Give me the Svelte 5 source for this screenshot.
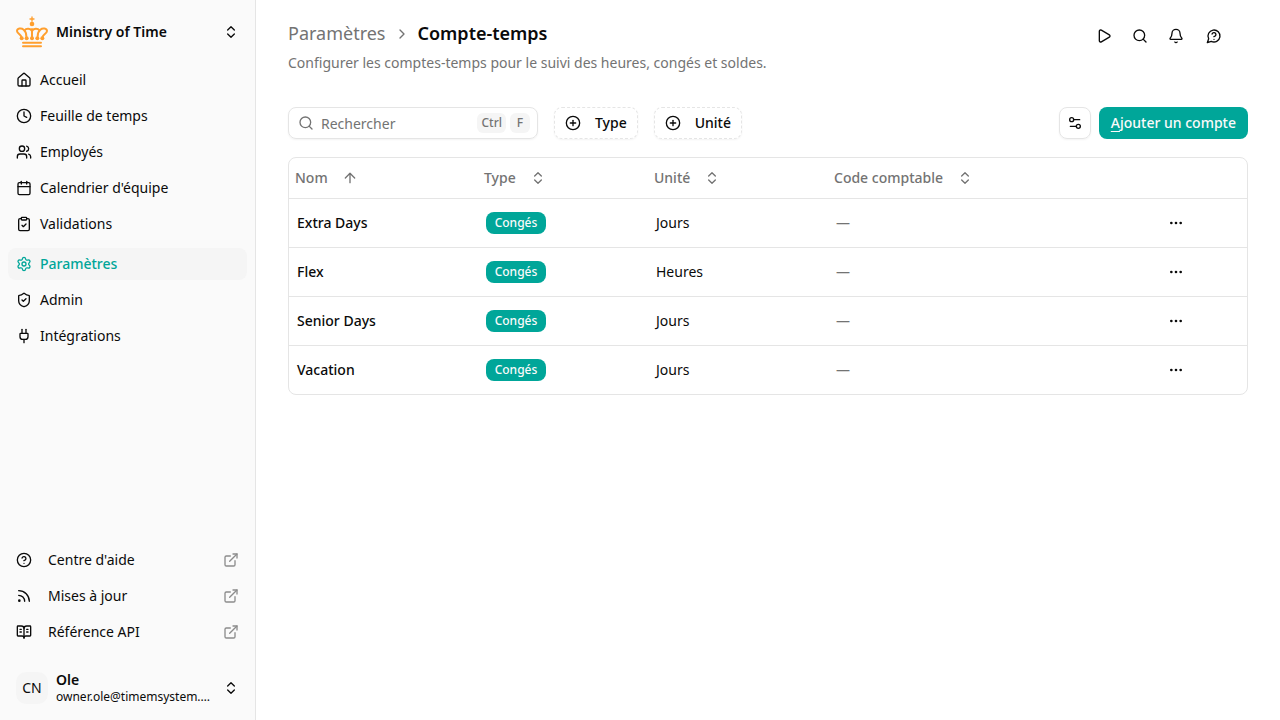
<script lang="ts">
  type NavItem = { label: string; icon: string; active?: boolean };
  type Account = { name: string; type: string; unit: string; code: string };
  type SortKey = keyof Account;

  const icons: Record<string, string[]> = {
    home: [
      'M15 21v-8a1 1 0 0 0-1-1h-4a1 1 0 0 0-1 1v8',
      'M3 10a2 2 0 0 1 .709-1.528l7-5.999a2 2 0 0 1 2.582 0l7 5.999A2 2 0 0 1 21 10v9a2 2 0 0 1-2 2H5a2 2 0 0 1-2-2z'
    ],
    clock: ['M2 12a10 10 0 1 0 20 0a10 10 0 1 0-20 0', 'M12 6v6l4 2'],
    users: [
      'M16 21v-2a4 4 0 0 0-4-4H6a4 4 0 0 0-4 4v2',
      'M5 7a4 4 0 1 0 8 0a4 4 0 1 0-8 0',
      'M22 21v-2a4 4 0 0 0-3-3.87',
      'M16 3.13a4 4 0 0 1 0 7.75'
    ],
    calendar: ['M8 2v4', 'M16 2v4', 'M5 4h14a2 2 0 0 1 2 2v14a2 2 0 0 1-2 2H5a2 2 0 0 1-2-2V6a2 2 0 0 1 2-2z', 'M3 10h18'],
    clipboard: [
      'M9 2h6a1 1 0 0 1 1 1v2a1 1 0 0 1-1 1H9a1 1 0 0 1-1-1V3a1 1 0 0 1 1-1z',
      'M16 4h2a2 2 0 0 1 2 2v14a2 2 0 0 1-2 2H6a2 2 0 0 1-2-2V6a2 2 0 0 1 2-2h2',
      'm9 14 2 2 4-4'
    ],
    settings: [
      'M9.671 4.136a2.34 2.34 0 0 1 4.659 0 2.34 2.34 0 0 0 3.319 1.915 2.34 2.34 0 0 1 2.33 4.033 2.34 2.34 0 0 0 0 3.831 2.34 2.34 0 0 1-2.33 4.033 2.34 2.34 0 0 0-3.319 1.915 2.34 2.34 0 0 1-4.659 0 2.34 2.34 0 0 0-3.32-1.915 2.34 2.34 0 0 1-2.33-4.033 2.34 2.34 0 0 0 0-3.831A2.34 2.34 0 0 1 6.35 6.051a2.34 2.34 0 0 0 3.319-1.915',
      'M9 12a3 3 0 1 0 6 0a3 3 0 1 0-6 0'
    ],
    shield: [
      'M20 13c0 5-3.5 7.5-7.66 8.95a1 1 0 0 1-.67-.01C7.5 20.5 4 18 4 13V6a1 1 0 0 1 1-1c2 0 4.5-1.2 6.24-2.72a1.17 1.17 0 0 1 1.52 0C14.51 3.81 17 5 19 5a1 1 0 0 1 1 1z',
      'm9 12 2 2 4-4'
    ],
    plug: ['M12 22v-5', 'M15 8V2', 'M17 8a1 1 0 0 1 1 1v4a4 4 0 0 1-4 4h-4a4 4 0 0 1-4-4V9a1 1 0 0 1 1-1z', 'M9 8V2'],
    help: ['M2 12a10 10 0 1 0 20 0a10 10 0 1 0-20 0', 'M9.09 9a3 3 0 0 1 5.83 1c0 2-3 3-3 3', 'M12 17h.01'],
    rss: ['M4 11a9 9 0 0 1 9 9', 'M4 4a16 16 0 0 1 16 16', 'M4 19a1 1 0 1 0 2 0a1 1 0 1 0-2 0'],
    book: [
      'M12 7v14',
      'M16 12h2',
      'M16 8h2',
      'M3 18a1 1 0 0 1-1-1V4a1 1 0 0 1 1-1h5a4 4 0 0 1 4 4 4 4 0 0 1 4-4h5a1 1 0 0 1 1 1v13a1 1 0 0 1-1 1h-6a3 3 0 0 0-3 3 3 3 0 0 0-3-3z',
      'M6 12h2',
      'M6 8h2'
    ],
    external: ['M15 3h6v6', 'M10 14 21 3', 'M18 13v6a2 2 0 0 1-2 2H5a2 2 0 0 1-2-2V8a2 2 0 0 1 2-2h6'],
    upDown: ['m7 15 5 5 5-5', 'm7 9 5-5 5 5'],
    up: ['m5 12 7-7 7 7', 'M12 19V5'],
    down: ['M12 5v14', 'm19 12-7 7-7-7'],
    right: ['m9 18 6-6-6-6'],
    play: ['M5 5a2 2 0 0 1 3.008-1.728l11.997 6.998a2 2 0 0 1 .003 3.458l-12 7A2 2 0 0 1 5 19z'],
    search: ['m21 21-4.34-4.34', 'M3 11a8 8 0 1 0 16 0a8 8 0 1 0-16 0'],
    bell: [
      'M10.268 21a2 2 0 0 0 3.464 0',
      'M3.262 15.326A1 1 0 0 0 4 17h16a1 1 0 0 0 .74-1.673C19.41 13.956 18 12.499 18 8A6 6 0 0 0 6 8c0 4.499-1.411 5.956-2.738 7.326'
    ],
    chat: ['M7.9 20A9 9 0 1 0 4 16.1L2 22Z', 'M9.09 9a3 3 0 0 1 5.83 1c0 2-3 3-3 3', 'M12 17h.01'],
    plus: ['M2 12a10 10 0 1 0 20 0a10 10 0 1 0-20 0', 'M8 12h8', 'M12 8v8'],
    sliders: ['M14 17H5', 'M19 7h-9', 'M14 17a3 3 0 1 0 6 0a3 3 0 1 0-6 0', 'M4 7a3 3 0 1 0 6 0a3 3 0 1 0-6 0'],
    dots: ['M11 12a1 1 0 1 0 2 0a1 1 0 1 0-2 0', 'M18 12a1 1 0 1 0 2 0a1 1 0 1 0-2 0', 'M4 12a1 1 0 1 0 2 0a1 1 0 1 0-2 0']
  };

  const mainNav: NavItem[] = [
    { label: 'Accueil', icon: 'home' },
    { label: 'Feuille de temps', icon: 'clock' },
    { label: 'Employés', icon: 'users' },
    { label: "Calendrier d'équipe", icon: 'calendar' },
    { label: 'Validations', icon: 'clipboard' }
  ];

  const adminNav: NavItem[] = [
    { label: 'Paramètres', icon: 'settings', active: true },
    { label: 'Admin', icon: 'shield' },
    { label: 'Intégrations', icon: 'plug' }
  ];

  const helpNav: NavItem[] = [
    { label: "Centre d'aide", icon: 'help' },
    { label: 'Mises à jour', icon: 'rss' },
    { label: 'Référence API', icon: 'book' }
  ];

  const tools = [
    { label: 'Démarrer', icon: 'play' },
    { label: 'Recherche', icon: 'search' },
    { label: 'Notifications', icon: 'bell' },
    { label: 'Aide', icon: 'chat' }
  ];

  const columns: { key: SortKey; label: string }[] = [
    { key: 'name', label: 'Nom' },
    { key: 'type', label: 'Type' },
    { key: 'unit', label: 'Unité' },
    { key: 'code', label: 'Code comptable' }
  ];

  const accounts: Account[] = [
    { name: 'Extra Days', type: 'Congés', unit: 'Jours', code: '' },
    { name: 'Flex', type: 'Congés', unit: 'Heures', code: '' },
    { name: 'Senior Days', type: 'Congés', unit: 'Jours', code: '' },
    { name: 'Vacation', type: 'Congés', unit: 'Jours', code: '' }
  ];

  let query = $state('');
  let sortKey = $state<SortKey>('name');
  let ascending = $state(true);
  let searchBox: HTMLInputElement;

  let rows = $derived(
    accounts
      .filter((a) => a.name.toLowerCase().includes(query.toLowerCase()))
      .sort((a, b) => a[sortKey].localeCompare(b[sortKey]) * (ascending ? 1 : -1))
  );

  function sortBy(key: SortKey) {
    ascending = key == sortKey ? !ascending : true;
    sortKey = key;
  }

  function sortIcon(key: SortKey) {
    if (key != sortKey) return 'upDown';
    return ascending ? 'up' : 'down';
  }

  function onKeydown(e: KeyboardEvent) {
    if (e.ctrlKey && e.key == 'f') {
      e.preventDefault();
      searchBox.focus();
    }
  }
</script>

<svelte:window onkeydown={onKeydown} />

{#snippet icon(name: string)}
  <svg class="icon" viewBox="0 0 24 24" aria-hidden="true">
    {#each icons[name] as d}
      <path {d} />
    {/each}
  </svg>
{/snippet}

{#snippet navList(items: NavItem[])}
  <ul>
    {#each items as item}
      <li>
        <a class="navItem" class:active={item.active} href="#{item.icon}">
          {@render icon(item.icon)}
          <span>{item.label}</span>
        </a>
      </li>
    {/each}
  </ul>
{/snippet}

<div class="layout">
  <aside>
    <button class="switcher">
      <svg class="crown" viewBox="0 0 96 96" aria-hidden="true">
        <path class="cross" d="M48 3v13M42 9h12" />
        <circle cx="48" cy="24" r="7" />
        <path d="M16 62C14 55 3 52 3 45c0-8 13-10 20-4 5 4 8 12 8 20" />
        <path d="M80 62c2-7 13-10 13-17 0-8-13-10-20-4-5 4-8 12-8 20" />
        <path d="M26 43c4-7 18-7 22 2 4-9 18-9 22-2M48 40v22" />
        <circle cx="17" cy="67" r="6" />
        <circle cx="32" cy="67" r="6" />
        <circle cx="48" cy="67" r="6" />
        <circle cx="64" cy="67" r="6" />
        <circle cx="79" cy="67" r="6" />
        <path d="M21 80h54M21 91h54" />
      </svg>
      <strong>Ministry of Time</strong>
      {@render icon('upDown')}
    </button>

    <nav class="main">
      {@render navList(mainNav)}
      {@render navList(adminNav)}
    </nav>

    <nav class="help">
      <ul>
        {#each helpNav as item}
          <li>
            <a class="navItem wide" href="#{item.icon}">
              {@render icon(item.icon)}
              <span>{item.label}</span>
              <span class="ext">{@render icon('external')}</span>
            </a>
          </li>
        {/each}
      </ul>
    </nav>

    <button class="switcher">
      <span class="avatar">CN</span>
      <span class="user">
        <strong>Ole</strong>
        <small>owner.ole@timemsystem.com</small>
      </span>
      {@render icon('upDown')}
    </button>
  </aside>

  <main>
    <header>
      <div class="heading">
        <div class="crumbs">
          <a href="#settings">Paramètres</a>
          {@render icon('right')}
          <h1>Compte-temps</h1>
        </div>
        <p>Configurer les comptes-temps pour le suivi des heures, congés et soldes.</p>
      </div>
      <div class="tools">
        {#each tools as tool}
          <button class="ghost" aria-label={tool.label}>{@render icon(tool.icon)}</button>
        {/each}
      </div>
    </header>

    <div class="toolbar">
      <label class="search">
        {@render icon('search')}
        <input type="text" placeholder="Rechercher" aria-label="Rechercher" bind:value={query} bind:this={searchBox} />
        <kbd>Ctrl</kbd>
        <kbd>F</kbd>
      </label>
      <button class="filter">{@render icon('plus')}Type</button>
      <button class="filter">{@render icon('plus')}Unité</button>
      <div class="actions">
        <button class="square" aria-label="Colonnes">{@render icon('sliders')}</button>
        <button class="primary"><span><u>A</u>jouter un compte</span></button>
      </div>
    </div>

    <div class="tableBox">
      <table>
        <colgroup>
          <col class="colName" />
          <col class="colType" />
          <col class="colUnit" />
          <col />
          <col class="colMenu" />
        </colgroup>
        <thead>
          <tr>
            {#each columns as col}
              <th scope="col">
                <button class="sort" onclick={() => sortBy(col.key)}>
                  {col.label}
                  {@render icon(sortIcon(col.key))}
                </button>
              </th>
            {/each}
            <th></th>
          </tr>
        </thead>
        <tbody>
          {#each rows as row (row.name)}
            <tr>
              <td class="name">{row.name}</td>
              <td><span class="badge">{row.type}</span></td>
              <td>{row.unit}</td>
              <td class="muted">{row.code || '—'}</td>
              <td class="menu">
                <button class="ghost" aria-label="Actions {row.name}">{@render icon('dots')}</button>
              </td>
            </tr>
          {/each}
        </tbody>
      </table>
    </div>
  </main>
</div>

<style>
  :global(body) {
    margin: 0;
    background: #fff;
    color: #0a0a0a;
    font: 14px/20px "Noto Sans", sans-serif;
  }

  * {
    box-sizing: border-box;
  }

  button {
    display: flex;
    align-items: center;
    border: 0;
    background: none;
    color: inherit;
    font: inherit;
    cursor: pointer;
  }

  a {
    color: inherit;
    text-decoration: none;
  }

  ul {
    display: flex;
    flex-direction: column;
    gap: 4px;
    margin: 0;
    padding: 0;
    list-style: none;
  }

  strong {
    font-weight: 600;
  }

  .icon {
    flex: none;
    width: 16px;
    height: 16px;
    fill: none;
    stroke: currentColor;
    stroke-width: 2;
    stroke-linecap: round;
    stroke-linejoin: round;
  }

  .layout {
    display: flex;
    min-height: 100vh;
  }

  /* sidebar */
  aside {
    display: flex;
    flex-direction: column;
    flex: none;
    gap: 8px;
    width: 256px;
    padding: 8px;
    background: #fafafa;
    border-right: 1px solid #e5e5e5;
  }

  .switcher {
    gap: 8px;
    width: 100%;
    height: 48px;
    padding: 8px;
    border-radius: 8px;
    text-align: left;
  }

  .switcher > strong,
  .user {
    flex: 1;
    min-width: 0;
  }

  .crown {
    flex: none;
    width: 32px;
    height: 32px;
    fill: none;
    stroke: #ff9f2e;
    stroke-width: 6;
    stroke-linecap: round;
  }

  .crown circle {
    fill: #ff9f2e;
    stroke: none;
  }

  .crown .cross {
    stroke-width: 4;
  }

  .main {
    display: flex;
    flex-direction: column;
    flex: 1;
    gap: 8px;
  }

  .help {
    padding-bottom: 8px;
  }

  .navItem {
    display: flex;
    align-items: center;
    gap: 8px;
    height: 32px;
    padding: 0 8px;
    border-radius: 8px;
  }

  .navItem.active {
    background: #f5f5f5;
    color: #00a699;
    font-weight: 500;
  }

  .navItem.wide {
    gap: 16px;
  }

  .ext {
    display: flex;
    margin-left: auto;
    color: #8c8c8c;
  }

  .avatar {
    display: flex;
    align-items: center;
    justify-content: center;
    flex: none;
    width: 32px;
    height: 32px;
    border-radius: 10px;
    background: #f5f5f5;
  }

  .user {
    display: flex;
    flex-direction: column;
    line-height: 18px;
  }

  .user small {
    overflow: hidden;
    font-size: 12px;
    line-height: 16px;
    text-overflow: ellipsis;
    white-space: nowrap;
  }

  /* page */
  main {
    flex: 1;
    min-width: 0;
    padding: 20px 32px;
  }

  header {
    display: flex;
    align-items: flex-start;
    justify-content: space-between;
    margin-bottom: 34px;
  }

  .heading {
    display: flex;
    flex-direction: column;
    gap: 6px;
    color: #737373;
  }

  .crumbs {
    display: flex;
    align-items: center;
    gap: 8px;
    font-size: 18px;
    line-height: 27px;
  }

  h1 {
    margin: 0;
    color: #0a0a0a;
    font-size: inherit;
    font-weight: 600;
  }

  p {
    margin: 0;
  }

  .tools {
    display: flex;
    gap: 4px;
    padding-right: 16px;
  }

  .ghost {
    justify-content: center;
    width: 32px;
    height: 32px;
    padding: 0;
    border-radius: 8px;
  }

  .tools .ghost:last-child {
    width: 36px;
  }

  .toolbar {
    display: flex;
    gap: 16px;
    margin-bottom: 18px;
  }

  .search,
  .filter,
  .square {
    height: 32px;
    border: 1px solid #e5e5e5;
    border-radius: 8px;
    box-shadow: 0 1px 2px rgba(0, 0, 0, 0.05);
  }

  .search {
    display: flex;
    align-items: center;
    gap: 4px;
    width: 250px;
    padding: 0 7px 0 9px;
    color: #737373;
  }

  input {
    flex: 1;
    min-width: 0;
    padding: 2px 0 0 3px;
    border: 0;
    outline: 0;
    background: none;
    color: #0a0a0a;
    font: inherit;
  }

  input::placeholder {
    color: #737373;
    opacity: 1;
  }

  kbd {
    min-width: 20px;
    padding: 0 4px;
    border-radius: 6px;
    background: #f5f5f5;
    font: 500 12px/20px "Noto Sans", sans-serif;
    text-align: center;
  }

  .filter {
    gap: 14px;
    padding: 0 10px;
    border-style: dashed;
    font-weight: 500;
  }

  .actions {
    display: flex;
    gap: 8px;
    margin-left: auto;
  }

  .square {
    justify-content: center;
    width: 32px;
    padding: 0;
  }

  .primary {
    height: 32px;
    padding: 0 12px;
    border-radius: 8px;
    background: #00a699;
    color: #fafafa;
    font-weight: 500;
  }

  u {
    text-underline-offset: 3px;
  }

  /* accounts table */
  .tableBox {
    overflow: hidden;
    border: 1px solid #e5e5e5;
    border-radius: 8px;
  }

  table {
    width: 100%;
    border-spacing: 0;
    table-layout: fixed;
  }

  .colName {
    width: 189px;
  }

  .colType {
    width: 170px;
  }

  .colUnit {
    width: 180px;
  }

  .colMenu {
    width: 143px;
  }

  th {
    height: 40px;
    padding: 0 6px;
  }

  td {
    height: 49px;
    padding: 0 8px;
    border-top: 1px solid #e5e5e5;
  }

  .sort {
    gap: 14px;
    padding: 0;
    color: #737373;
    font-weight: 500;
  }

  .name {
    font-weight: 500;
  }

  .muted {
    color: #737373;
  }

  .badge {
    display: inline-block;
    min-width: 60px;
    padding: 3px 8px;
    border-radius: 8px;
    background: #00a699;
    color: #fafafa;
    font-size: 12px;
    font-weight: 500;
    line-height: 16px;
    text-align: center;
    vertical-align: middle;
  }

  .menu .ghost {
    margin: 0 auto;
  }
</style>
